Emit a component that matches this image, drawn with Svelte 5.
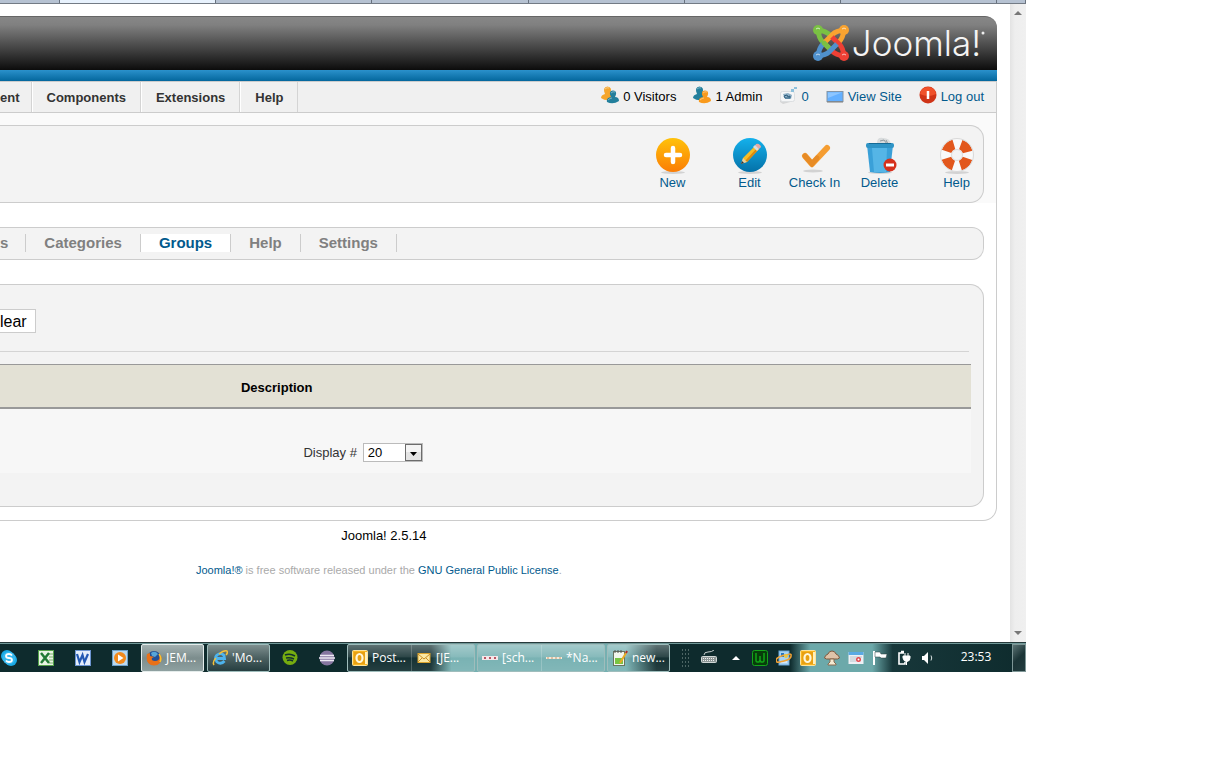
<script>
  const browserTabs = [59, 157, 156, 157, 156, 157, 156, 28];
  const menu = ['ent', 'Components', 'Extensions', 'Help'];
  const submenu = ['s', 'Categories', 'Groups', 'Help', 'Settings'];
  const status = [
    { icon: 'visitors', label: '0 Visitors' },
    { icon: 'admin', label: '1 Admin' },
    { icon: 'mail', label: '0', link: true },
    { icon: 'site', label: 'View Site', link: true },
    { icon: 'logout', label: 'Log out', link: true }
  ];
  const tools = [
    { icon: 'new', label: 'New' },
    { icon: 'edit', label: 'Edit', apart: true },
    { icon: 'check', label: 'Check In' },
    { icon: 'trash', label: 'Delete' },
    { icon: 'ring', label: 'Help', apart: true }
  ];
  const groups = [
    [{ icon: 'outlook', label: 'Post...' }, { icon: 'envelope', label: '[JE...' }],
    [{ icon: 'dots', label: '[sch...' }, { icon: 'dashes', label: '*Na...' }],
    [{ icon: 'notepad', label: 'new...' }]
  ];
  const tray = ['up', 'wamp', 'globe', 'outlook', 'mushroom', 'calendar', 'flag', 'power', 'sound'];
  let limit = $state('20');
</script>

{#snippet people(back, front, flip)}
  <path d="M0 12Q0 9 4 8 1 1 6.500 0.500 12 1 9 8l3 2-2 4Q4 15 0 12z" fill={back} />
  <path d="M6 16Q5 12 10 11 7 5 12 4.500 17 5 14 11q4 0 4 4-6 4-12 1z" fill={front} />
  <path d="M4 3q2-2 4-1M10 7q2-2 4-1M7 14q2-2 4-2" stroke="#ffffff66" fill="none" />
{/snippet}

{#snippet smallIcon(name)}
  <svg class="i18" viewBox="0 0 18 18" aria-hidden="true">
    {#if name === 'visitors'}
      {@render people('#f5a62c', '#227f9c')}
    {:else if name === 'admin'}
      {@render people('#227f9c', '#f99a1c')}
    {:else if name === 'mail'}
      <path d="M1 7l12-1 2 9-11 3-3-2z" fill="#d5d6d7" />
      <rect x="1.500" y="5.500" width="14" height="10" rx="2" fill="#f5f6f7" stroke="#dcdfe1" />
      <path d="M4 8l5-1 4 2-1 4-6 0z" fill="#8fb0c6" />
      <path d="M5 10l3-1 1 2 2-1v2H6z" fill="none" stroke="#2b5c7c" />
      <path d="M12 3h3v3h-3zM15 1h3v2h-3z" fill="#8cc0dc" />
    {:else if name === 'site'}
      <rect x="1" y="5.500" width="16" height="10" fill="#64b0ff" stroke="#8495a6" />
      <path d="M2 6.500h14L2 12z" fill="#8dc6ff" />
      <path d="M1 16h16" stroke="#7d7d7d" />
    {:else if name === 'logout'}
      <circle cx="9" cy="9" r="8.500" fill="#cf3417" />
      <path d="M1 8a8 7 0 0 1 16 0q-8 4-16 0z" fill="#f0512a" />
      <path d="M9 5v8" stroke="#fff" stroke-width="2.500" />
    {/if}
  </svg>
{/snippet}

{#snippet toolIcon(name)}
  <svg class="i38" viewBox="0 0 38 38" aria-hidden="true">
    {#if name !== 'check'}<ellipse cx="19" cy="35.500" rx="12" ry="1.500" fill="#d2d2d2" />{/if}
    {#if name === 'new'}
      <circle cx="19" cy="18" r="17" fill="url(#gOrange)" />
      <path d="M19 11v14M12 18h14" stroke="#fff" stroke-width="4.500" stroke-linecap="round" />
    {:else if name === 'edit'}
      <circle cx="19" cy="18" r="17" fill="url(#gBlue)" />
      <path d="M11 26l1-5L24 9l4 3-12 13z" fill="#f7bd24" />
      <path d="M14 24L26 11l2 1-12 13z" fill="#d98a10" />
      <path d="M10 27l2-6 4 4z" fill="#e8cfa0" />
      <path d="M10 27l1-3 2 2z" fill="#333" />
      <path d="M24 9l1-2q2-1 4 1t0 3l-1 1z" fill="#e8a9a2" />
      <path d="M22 10l2-2 4 4-2 2z" fill="#d8dde0" />
    {:else if name === 'check'}
      <ellipse cx="17" cy="34" rx="10" ry="1.500" fill="#d2d2d2" />
      <path d="M9 19l7 8L31 11" fill="none" stroke="#f59d31" stroke-width="6" stroke-linejoin="round" stroke-linecap="round" />
      <path d="M9 19l7 8 5-6" fill="none" stroke="#d97a1a" stroke-width="5" stroke-linecap="round" opacity=".5" />
    {:else if name === 'trash'}
      <path d="M16 6q0-6 6-5 7 0 8 6l-3 2-10-1z" fill="#d9dcdd" />
      <path d="M19 4l4-1 3 4M25 3l2 4" stroke="#8f999e" fill="none" />
      <path d="M6 8h26l-3 27q-10 2-20 0z" fill="#3aa0d8" />
      <path d="M11 11h15l-1 24H13z" fill="#55b5e6" />
      <rect x="5" y="6" width="28" height="5" rx="2" fill="#2f94c6" />
      <path d="M8 6.500h22" stroke="#166b96" />
      <circle cx="29" cy="28" r="6.500" fill="#d6301c" />
      <path d="M25 28h8" stroke="#fff" stroke-width="3" />
    {:else if name === 'ring'}
      <circle cx="19" cy="18" r="11" fill="none" stroke="#f9f9f9" stroke-width="11" />
      <circle cx="19" cy="18" r="11" fill="none" stroke="#e2571c" stroke-width="10" stroke-dasharray="10.280 7" stroke-dashoffset="-3.500" />
      <circle cx="19" cy="18" r="16.500" fill="none" stroke="#d9d9d9" />
      <circle cx="19" cy="18" r="5.500" fill="none" stroke="#ddd" />
    {/if}
  </svg>
{/snippet}

{#snippet taskIcon(name)}
  <svg class="i16" viewBox="0 0 16 16" aria-hidden="true">
    {#if name === 'skype'}
      <circle cx="6" cy="6" r="6" fill="#19a9e5" /><circle cx="10" cy="10" r="6" fill="#19a9e5" />
      <circle cx="8" cy="8" r="6.500" fill="#35b8ee" />
      <path d="M11 5.500Q10 4 8 4 5 4 5 6t3 2 3 2-3 2q-2 0-3-1.500" fill="none" stroke="#fff" stroke-width="1.800" />
    {:else if name === 'excel'}
      <rect x=".5" y=".5" width="15" height="15" fill="#e9f4e4" stroke="#54a24b" />
      <path d="M11 4h4M11 7h4M11 10h4M11 13h4" stroke="#7ab06f" />
      <path d="M3 3l8 10M11 3L3 13" stroke="#217a35" stroke-width="2.500" />
    {:else if name === 'word'}
      <rect x=".5" y=".5" width="15" height="15" fill="#e5eefb" stroke="#6c94d0" />
      <path d="M2 4l2.500 8L7.500 5 9.500 12 13 4" fill="none" stroke="#2459b3" stroke-width="2.200" />
    {:else if name === 'media'}
      <rect x=".5" y=".5" width="15" height="15" fill="#bcd9ee" stroke="#6ba1cc" />
      <circle cx="8" cy="8" r="6" fill="#f28a1d" /><path d="M6 4.500L11.500 8 6 11.500z" fill="#fff" />
    {:else if name === 'firefox'}
      <circle cx="8" cy="8" r="7" fill="#234f96" />
      <path d="M5 3q4-3 7 1l-3 3-3-1z" fill="#56a5d8" />
      <path d="M1 4Q-1 15 8 15.500 16 15 15.500 7L13 4q2 7-4 7-4 0-3-3l2-1-4-1V3z" fill="#e8711a" />
      <path d="M13 4q3 4 1 8" fill="none" stroke="#fbc02d" stroke-width="1.500" />
    {:else if name === 'ie'}
      <path d="M12.500 11Q9 15 5 12 2 8 5 5 9 2 12 5.500L12.500 8.500H5" fill="none" stroke="#4db4ee" stroke-width="2.800" />
      <path d="M2 15Q0 12 4 8M7 4q5-4 8-3 1 2-1 4" fill="none" stroke="#f4c13a" stroke-width="1.500" />
    {:else if name === 'spotify'}
      <circle cx="8" cy="7.500" r="7.500" fill="#76ac10" />
      <path d="M3 5q5-2 10 1M4 8q4-1 8 1M5 10.500q3-1 6 .500" fill="none" stroke="#12302f" stroke-width="1.500" />
    {:else if name === 'eclipse'}
      <circle cx="8" cy="8" r="7.500" fill="#85759f" />
      <path d="M1 5.500h14M0 8h16M1 10.500h14" stroke="#ece8f2" stroke-width="1.300" />
    {:else if name === 'outlook'}
      <rect x=".5" y=".5" width="15" height="15" rx="1" fill="#f7b51f" stroke="#fde29a" />
      <path d="M12 2h3v12h-3z" fill="#fff1bc" />
      <rect x="2" y="2" width="11" height="12" fill="#e9a012" />
      <ellipse cx="7.500" cy="8" rx="3" ry="4" fill="none" stroke="#fff7d8" stroke-width="2.200" />
    {:else if name === 'envelope'}
      <rect x="2" y="3.500" width="12" height="9" fill="#fbe9a4" stroke="#dba42e" />
      <path d="M2 4l6 5 6-5M2 12l4-4M14 12l-4-4" fill="none" stroke="#c98d24" />
    {:else if name === 'dots'}
      <rect y="6" width="16" height="4" fill="#f4e7e9" />
      <path d="M2 8h2M7 8h2M12 8h2" stroke="#b95662" stroke-width="2" />
    {:else if name === 'dashes'}
      <path d="M0 8h16" stroke="#f2e9db" stroke-width="2" />
      <path d="M1 8h14" stroke="#c99768" stroke-dasharray="2 2" />
    {:else if name === 'notepad'}
      <rect x="1.500" y="1.500" width="11" height="14" fill="#f2f6ec" stroke="#69745f" />
      <path d="M3 8h8v6H3z" fill="#78c442" />
      <path d="M3 0v3M6 0v3M9 0v3" stroke="#555" />
      <path d="M8 13l6-10" stroke="#e7aa25" stroke-width="2" /><path d="M14 3l1-2" stroke="#b22a20" stroke-width="2" />
    {:else if name === 'keyboard'}
      <rect x=".5" y="6.500" width="15" height="6" rx="1" fill="#8b9695" stroke="#d0d7d6" />
      <path d="M2 8.500h12M2 10.500h12" stroke="#eee" stroke-dasharray="1 1" />
      <path d="M3 5q0-3 4-3t6-2" fill="none" stroke="#c4cdcc" />
    {:else if name === 'up'}
      <path d="M4 10l4-4 4 4z" fill="#fff" />
    {:else if name === 'wamp'}
      <rect x=".5" y=".5" width="15" height="15" rx="2" fill="#073d0a" stroke="#14a51a" />
      <path d="M4 3v8l1 1h2l1-2 1 2h2l1-1V3M8 6v4" fill="none" stroke="#11a517" stroke-width="1.500" />
    {:else if name === 'globe'}
      <rect x="3" y="1" width="10" height="14" fill="#a6d2f4" stroke="#6aa8da" />
      <rect x="5" y="3" width="3" height="4" fill="#2675bd" /><path d="M5 12h6" stroke="#fff" />
      <path d="M1 12Q-2 8 7 5.500T15 5q1 4-7 6t-7 1z" fill="none" stroke="#f1a235" stroke-width="1.500" />
      <circle cx="10" cy="6" r="2" fill="#e9c743" />
    {:else if name === 'mushroom'}
      <path d="M.5 8Q1 5 4 4q1-3 4-3t4 3q3 1 3.500 4l-2 1h-11z" fill="#dfc3a8" stroke="#80593d" />
      <path d="M6 9h4l0 3 2 2v1H4v-1l2-2z" fill="#f5ead2" stroke="#8a6a4e" />
    {:else if name === 'calendar'}
      <rect x=".5" y="2" width="15" height="12" fill="#edf1f5" /><path d="M.5 3.500h15" stroke="#5aaae4" stroke-width="3" />
      <path d="M2 7h12M2 9h6M2 11h6" stroke="#bcc6ce" /><circle cx="10.500" cy="9.500" r="2.500" fill="#e2474d" /><circle cx="10.500" cy="9.500" r="1" fill="#fff" />
    {:else if name === 'flag'}
      <path d="M2 1v14" stroke="#fff" stroke-width="2" />
      <path d="M3 2h5l1 2h6l-1 4H9L8 7H3z" fill="#fff" stroke="#2b3d3e" stroke-width=".5" />
    {:else if name === 'power'}
      <path d="M8 3H3v11h6v-2M5 1.500h3" fill="none" stroke="#fff" stroke-width="1.600" />
      <path d="M7 6h7v2q0 3-3 3.500T7 8zM9 3v3M12 3v3M10.500 11v4" fill="#fff" stroke="#fff" />
    {:else if name === 'sound'}
      <path d="M2 6h2l4-4v12l-4-4H2z" fill="#fff" />
      <path d="M11 5.500q1.500 2.500 0 5" fill="none" stroke="#dce5e4" />
    {/if}
  </svg>
{/snippet}

<svg class="defs" aria-hidden="true">
  <defs>
    <linearGradient id="gOrange" x1="0" y1="0" x2="0" y2="1"><stop offset="0" stop-color="#ffc20a" /><stop offset="1" stop-color="#fb7d05" /></linearGradient>
    <linearGradient id="gBlue" x1="0" y1="0" x2="0" y2="1"><stop offset="0" stop-color="#14b1ec" /><stop offset="1" stop-color="#0471a8" /></linearGradient>
  </defs>
</svg>

<div class="screen">
  <div class="tabs">
    {#each browserTabs as w, i}<span class:on={i === 1} style="flex-grow: {w}"></span>{/each}
  </div>

  <div class="view">
    <div class="page">
      <header>
        <svg class="mark" viewBox="0 0 36 36" aria-hidden="true">
          {#each [['#7ac143', 0], ['#f9a330', 90], ['#ee4035', 180], ['#5091cd', 270]] as [color, turn]}
            <g transform="rotate({turn} 18 18)" fill="none" stroke={color} stroke-width="5">
              <path d="M5 5Q6 13 9 16L17 24M5 5Q13 6 17 10" />
              <circle cx="5" cy="5" r="5" fill={color} stroke="none" />
            </g>
          {/each}
          <path d="M10 17l6 6" stroke="#7ac143" stroke-width="5" />
          <path d="M3 4q2-2 4 0M29 4q2-2 4 0M3 30q2-2 4 0M29 30q2-2 4 0" stroke="#ffffffaa" fill="none" />
        </svg>
        <span class="wordmark">Joomla!</span>
        <svg class="reg" viewBox="0 0 4 4" aria-hidden="true"><circle cx="2" cy="2" r="1.500" fill="#eee" /></svg>
      </header>
      <div class="stripe"></div>

      <div class="frame">
        <div class="menubar">
          <nav>
            {#each menu as m}<a href="#menu">{m}</a>{/each}
          </nav>
          <div class="status">
            {#each status as s}
              <span class="stat">
                {@render smallIcon(s.icon)}
                {#if s.link}<a href="#status">{s.label}</a>{:else}<span>{s.label}</span>{/if}
              </span>
            {/each}
          </div>
        </div>

        <div class="toolwrap">
          <div class="toolbar">
            {#each tools as t}
              <button class:apart={t.apart}>{@render toolIcon(t.icon)}{t.label}</button>
            {/each}
          </div>
        </div>

        <nav class="submenu">
          {#each submenu as s}<a href="#sub" class:active={s === 'Groups'}>{s}</a>{/each}
        </nav>

        <main>
          <div class="filter"><button>lear</button></div>
          <table>
            <thead><tr><th class="desc">Description</th><th></th></tr></thead>
            <tbody>
              <tr>
                <td colspan="2">
                  <div class="pager">
                    <label for="limit">Display #</label>
                    <span class="pick">
                      <select id="limit" bind:value={limit}>
                        <option>20</option>
                        <option>50</option>
                      </select>
                      <svg viewBox="0 0 17 17" aria-hidden="true">
                        <rect x=".5" y=".5" width="16" height="16" fill="#e4e4e4" stroke="#6c6c6c" />
                        <path d="M1 1h15v7H1z" fill="#f4f4f4" />
                        <path d="M5 8h7l-3.500 4z" fill="#000" />
                      </svg>
                    </span>
                  </div>
                </td>
              </tr>
            </tbody>
          </table>
        </main>
      </div>

      <footer>
        <p class="version">Joomla! 2.5.14</p>
        <p class="legal"><a href="#joomla">Joomla!®</a> is free software released under the <a href="#gpl">GNU General Public License</a>.</p>
      </footer>
    </div>
    <div class="scroll">
      <svg viewBox="0 0 8 5" aria-hidden="true"><path d="M0 5l4-4 4 4z" fill="#777" /></svg>
      <svg viewBox="0 0 8 5" aria-hidden="true"><path d="M0 0h8L4 4z" fill="#777" /></svg>
    </div>
  </div>

  <div class="taskbar">
    <div class="launch first">
      {#each ['skype', 'excel', 'word', 'media'] as n}<span>{@render taskIcon(n)}</span>{/each}
    </div>
    <div class="group lit"><button>{@render taskIcon('firefox')}JEM...</button></div>
    <div class="group dim"><button>{@render taskIcon('ie')}'Mo...</button></div>
    <div class="launch">
      {#each ['spotify', 'eclipse'] as n}<span>{@render taskIcon(n)}</span>{/each}
    </div>
    <div class="groups">
      {#each groups as g}
        <div class="group">
          {#each g as t}<button>{@render taskIcon(t.icon)}{t.label}</button>{/each}
        </div>
      {/each}
    </div>
    <div class="grip"></div>
    <div class="tray">
      <span class="kbd">{@render taskIcon('keyboard')}</span>
      {#each tray as n}<span>{@render taskIcon(n)}</span>{/each}
    </div>
    <time>23:53</time>
    <div class="desk"></div>
  </div>
</div>

<style>
  :global(body) { margin: 0; background: #fff; }
  .defs { position: absolute; width: 0; height: 0; }
  .screen { margin-right: 194px; overflow: hidden; font: 13px/16px "Liberation Sans", Arial, sans-serif; color: #000; }
  a { color: #025a8d; text-decoration: none; }
  button { font: inherit; cursor: pointer; }
  svg { display: block; flex: none; }

  .tabs { display: flex; height: 3px; background: #b6c2d2; border-bottom: 1px solid #737b85; }
  .tabs span { flex: 1 1 0; border-right: 1px solid #68727f; box-sizing: border-box; }
  .tabs .on { background: #e8f2fd; }

  .view { display: flex; }
  .page { flex: 1; min-width: 0; padding: 12px 13px 0 0; }
  header {
    display: flex; justify-content: flex-end; align-items: center; height: 53px; padding-right: 12px;
    border-top: 1px solid #666; border-top-right-radius: 12px;
    background: linear-gradient(#878787, #808080 15%, #0c0c0c);
    box-sizing: border-box; height: 54px; padding-bottom: 2px;
  }
  .mark { width: 36px; height: 36px; margin-right: 3px; }
  .wordmark { font: 300 35px/40px Inter, "DejaVu Sans", sans-serif; color: #f4f4f4; }
  .reg { width: 4px; height: 4px; margin-bottom: 20px; }
  .stripe { height: 11px; background: linear-gradient(#2a91cb, #04679d); }

  .frame { border-right: 1px solid #ccc; border-bottom: 1px solid #ccc; border-bottom-right-radius: 14px; padding-bottom: 13px; }
  .menubar { display: flex; justify-content: space-between; height: 30px; background: #f0f0f0; border-top: 1px solid #ccc; border-bottom: 1px solid #ccc; }
  .menubar nav { display: flex; }
  .menubar nav a { padding: 0 14px; border-left: 1px solid #fff; border-right: 1px solid #d4d4d4; font-weight: bold; line-height: 31px; color: #333; }
  .menubar nav a:first-child { padding: 0 11px 0 0; border-left: 0; }
  .status { display: flex; gap: 17px; padding-right: 12px; line-height: 30px; }
  .stat { display: flex; gap: 4px; }
  .i18 { width: 18px; height: 18px; margin-top: 4px; }

  .toolwrap { padding: 12px 12px 0 0; background: #fafafa; }
  .toolbar { display: flex; justify-content: flex-end; gap: 12px; height: 76px; background: #f3f3f3; border: 1px solid #ccc; border-left: 0; border-radius: 0 14px 14px 0; }
  .toolbar button { display: flex; flex-direction: column; align-items: center; width: 53px; padding: 11px 0 0; border: 0; background: none; color: #025a8d; white-space: nowrap; }
  .toolbar .apart { margin-left: 12px; }
  .i38 { width: 38px; height: 38px; }

  .submenu { display: flex; align-items: flex-start; height: 25px; padding-top: 6px; margin: 24px 12px 0 0; background: #f3f3f3; border: 1px solid #ccc; border-left: 0; border-radius: 0 12px 12px 0; }
  .submenu a { padding: 0 18px; border-right: 1px solid #ccc; font: bold 15px/18px "Liberation Sans", Arial, sans-serif; color: #808080; }
  .submenu a:first-child { padding-left: 0; padding-right: 17px; }
  .submenu .active { background: #fff; color: #025a8d; }

  main { margin: 24px 12px 0 0; padding: 24px 12px 33px 0; background: #f3f3f3; border: 1px solid #ccc; border-left: 0; border-radius: 0 14px 14px 0; }
  .filter { margin-right: 2px; padding-bottom: 18px; border-bottom: 1px solid #d4d4d4; }
  .filter button { display: block; height: 24px; padding: 1px 8px 0 0; border: 1px solid #ccc; border-left: 0; background: #fff; font-size: 16px; color: #000; }
  table { width: 100%; margin-top: 12px; border-collapse: separate; border-spacing: 0; table-layout: fixed; }
  th { height: 39px; padding: 3px 0 0; border-top: 1px solid #999; border-bottom: 2px solid #999; background: #e3e1d5; vertical-align: middle; }
  .desc { width: 57%; }
  td { height: 64px; padding: 0; background: #f7f7f7; vertical-align: top; }
  .pager { display: flex; justify-content: center; gap: 6px; width: 75%; padding: 34px 2px 0 0; box-sizing: border-box; line-height: 20px; color: #333; }
  .pick { position: relative; }
  select { display: block; appearance: none; width: 60px; height: 19px; padding: 0 0 0 4px; border: 1px solid #bbb; border-radius: 0; background: #fff; font: 13px/18px "Liberation Sans", Arial, sans-serif; color: #000; }
  .pick svg { position: absolute; right: 1px; top: 1px; width: 17px; height: 17px; pointer-events: none; }

  footer { width: 77%; height: 121px; text-align: center; }
  footer p { margin: 0; }
  .version { padding-top: 7px; }
  .legal { padding: 18px 10px 0 0; font-size: 11px; color: #aaa; white-space: nowrap; }

  .scroll { display: flex; flex-direction: column; justify-content: space-between; align-items: center; width: 16px; padding: 6px 0 6px; background: linear-gradient(90deg, #e3e3e3, #eeeeee 30%, #f0f0f0); box-sizing: border-box; }
  .scroll svg { width: 8px; height: 5px; }

  .taskbar {
    display: flex; height: 30px; box-sizing: border-box; border-top: 1px solid #26393a; box-shadow: inset 0 1px #6f9797;
    background: linear-gradient(90deg, #0e2b2d 0 42%, #75b0b1 44% 61%, #0e2b2d 64% 77%, #6ca9aa 79% 85%, #17373a 87%, #0e2b2d);
    font: 12px/28px "Open Sans", "Noto Sans", sans-serif; color: #fff;
  }
  .i16 { width: 16px; height: 16px; }
  .launch { display: flex; margin-right: 2px; }
  .launch.first { margin: 0 3px 0 -10px; }
  .launch span { display: flex; justify-content: center; align-items: center; width: 37px; }
  .groups { display: flex; gap: 2px; }
  .group { display: flex; margin-top: 1px; border: 1px solid #9fbdbc; border-radius: 2px; box-sizing: border-box; background: linear-gradient(#ffffff55, #ffffff22 45%, #ffffff08 50%, #ffffff18); }
  .group button { display: flex; align-items: center; gap: 4px; width: 61px; padding: 0 0 0 4px; border: 0; background: none; color: #fff; white-space: nowrap; box-sizing: border-box; }
  .groups .group button { width: 63px; }
  .groups .group button:only-child { width: 61px; }
  .group button + button { border-left: 1px solid #ffffff33; }
  .lit { margin-right: 3px; border-color: #e4eceb; background: linear-gradient(#a3b1b1, #7c8d8d 50%, #8ea0a0); }
  .dim { margin-right: 1px; background: linear-gradient(#7e8f8f, #4b6061 50%, #263e40); }
  .grip { width: 9px; margin: 5px auto 3px 11px; background: radial-gradient(circle, #4c6564 1px, transparent 1px) 0 0 / 3px 4px; }
  .tray { display: flex; }
  .tray span { display: flex; justify-content: center; align-items: center; width: 24px; }
  .tray .kbd { margin-right: 3px; }
  time { width: 72px; text-align: center; }
  .desk { width: 14px; margin-top: 1px; border: 1px solid #7e9696; box-sizing: border-box; background: linear-gradient(135deg, #5b7273, #1b3436 50%, #223c3e); }
</style>
